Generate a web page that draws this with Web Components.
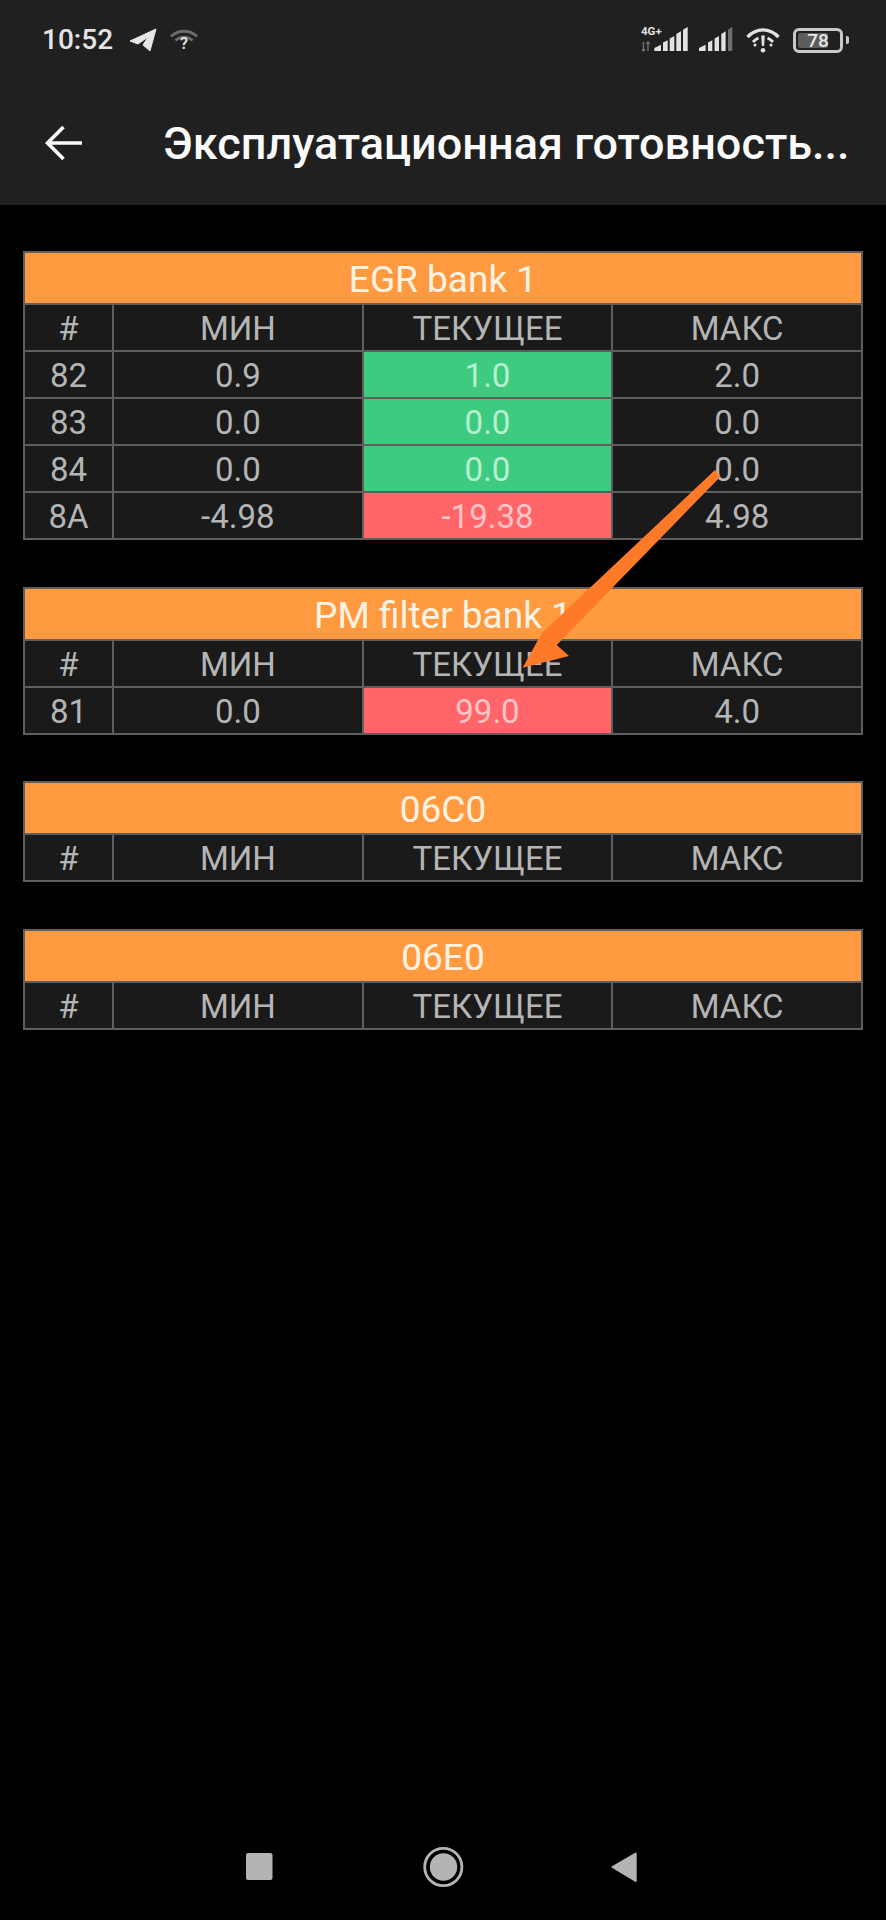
<!doctype html>
<html><head><meta charset="utf-8">
<style>
html,body{margin:0;background:#000;font-family:Roboto,"Liberation Sans",sans-serif}
body{width:886px;height:1920px;overflow:hidden;position:relative;display:flex;flex-direction:column}
</style></head><body>
<status-bar></status-bar>
<app-bar title="Эксплуатационная готовность..."></app-bar>
<main-list>
<readiness-table title="EGR bank 1" rows='[["82","0.9","1.0","2.0","g"],["83","0.0","0.0","0.0","g"],["84","0.0","0.0","0.0","g"],["8A","-4.98","-19.38","4.98","r"]]'></readiness-table>
<readiness-table title="PM filter bank 1" rows='[["81","0.0","99.0","4.0","r"]]'></readiness-table>
<readiness-table title="06C0" rows='[]'></readiness-table>
<readiness-table title="06E0" rows='[]'></readiness-table>
</main-list>
<nav-bar></nav-bar>
<arrow-mark></arrow-mark>
<script>
function def(name,html){customElements.define(name,class extends HTMLElement{connectedCallback(){if(this.shadowRoot)return;const s=this.attachShadow({mode:'open'});s.innerHTML=typeof html==='function'?html(this):html;}});}
def('status-bar',`<style>
:host{display:flex;align-items:center;box-sizing:border-box;height:80px;padding:0 37px 0 42px;background:#202020;color:#e6e6e6}
.t{font:500 28px/1 Roboto,sans-serif;color:#e4e4e4;width:87px}
svg{display:block;flex:none}
.sp{flex:1}
</style>
<span class="t">10:52</span>
<svg width="28" height="24" viewBox="0 0 28 24" style="margin-right:13px"><path d="M1 13 27 1 21 23 14 17 19 9 9 16Z" fill="#e6e6e6" stroke="#e6e6e6" stroke-width="1" stroke-linejoin="round"/></svg>
<svg width="28" height="22" viewBox="0 0 28 22"><path d="M1 7.500C8 .5 20 .5 27 7.500M5.500 11.500C10 7 18 7 22.500 11.500" fill="none" stroke="#6e6e6e" stroke-width="2.800"/><text x="14" y="19.500" text-anchor="middle" font-family="Roboto" font-weight="700" font-size="16" fill="#dcdcdc">?</text></svg>
<span class="sp"></span>
<svg width="47" height="30" viewBox="0 -4 47 30" style="margin-right:10.700px;margin-top:-4px"><text x="0" y="8" font-family="Roboto" font-weight="700" font-size="11.500" fill="#e0e0e0">4G+</text><path d="M2.500 24v-9M.8 22.300l1.700 1.700 1.700-1.700M7 15v9M5.300 16.700l1.700-1.700 1.700 1.700" stroke="#707070" stroke-width="1.400" fill="none"/><path fill="#e2e2e2" d="M13.300 24v-3l6.700-3.300V24ZM22 24v-8.500l4.700-2.200V24ZM28.700 24V11.500l4.600-2.500V24ZM35.300 24V7l4.700-2.700V24ZM42 24V2.700L46.700 0V24Z"/></svg>
<svg width="34" height="26" viewBox="0 0 34 26" style="margin-right:13px"><path fill="#e2e2e2" d="M0 24v-3l6.600-3.300V24ZM9 24v-8.500l4.300-2.200V24ZM15.600 24V11.500L20 9V24ZM22.300 24V7l4.300-2.700V24Z"/><path fill="#6d6d6d" d="M29 24V2.700L33.300 0V24Z"/></svg>
<svg width="34" height="26" viewBox="0 0 34 26" style="margin-right:13px"><path d="M1.500 10C10.500 .5 23.500 .5 32.500 10" fill="none" stroke="#e2e2e2" stroke-width="3.400"/><path d="M7 15C9 12.800 10.500 11.800 12.500 11M27 15C25 12.800 23.500 11.800 21.500 11" fill="none" stroke="#e2e2e2" stroke-width="2.800"/><circle cx="9" cy="18" r="1.500" fill="#e2e2e2"/><circle cx="25" cy="18" r="1.500" fill="#e2e2e2"/><path d="M15.200 8.500h3.600l-.7 10.500h-2.200Z" fill="#e2e2e2"/><circle cx="17" cy="23.300" r="2.300" fill="#e2e2e2"/></svg>
<span style="box-sizing:border-box;width:50px;height:25px;border:3px solid #c9c9c9;border-radius:6px;position:relative;display:flex;align-items:center;justify-content:center;font:500 19px/1 Roboto,sans-serif;color:#e6e6e6"><span style="position:absolute;left:2px;top:2px;bottom:2px;width:30px;background:#5c5c5c;border-radius:2px"></span><span style="position:relative">78</span></span>
<span style="width:3px;height:8px;background:#c9c9c9;border-radius:0 2px 2px 0;margin-left:3px;flex:none"></span>
`);
def('app-bar',h=>`<style>
:host{display:flex;align-items:center;box-sizing:border-box;height:125px;padding:0 0 0 45px;background:#202020}
svg{display:block;margin-right:81px;flex:none}
.t{font:500 45px/1.2 Roboto,sans-serif;color:#fafafa;white-space:nowrap;position:relative;top:1px}
</style>
<svg width="37" height="36" viewBox="0 0 37 36"><path d="M37 18H3M18.500 2 2.500 18l16 16" fill="none" stroke="#fafafa" stroke-width="3.600"/></svg>
<span class="t">${h.getAttribute('title')}</span>`);
def('main-list',`<style>:host{display:flex;flex-direction:column;gap:46.500px;padding:46px 23px 0 23px}</style><slot></slot>`);
def('readiness-table',h=>{
const c=(t,k='')=>`<div class="c ${k}">${t}</div>`;
const rows=JSON.parse(h.getAttribute('rows'));
return `<style>
:host{display:block;box-sizing:border-box;width:840px;border:2px solid #5e5e5e;background:#5e5e5e}
.title{height:50px;box-sizing:border-box;padding-top:4px;background:#ff9a40;color:#fff3e4;font:400 37px/46px Roboto,sans-serif;text-align:center;white-space:nowrap;overflow:hidden}
.g{display:grid;grid-template-columns:87px 1fr 1fr 1fr;gap:2px;margin-top:2px}
.c{height:45px;box-sizing:border-box;padding-top:3px;background:#1a1a1a;color:#b5b5b5;font:400 33px/42px Roboto,sans-serif;text-align:center;white-space:nowrap}
.cg{background:#3ecb7f;color:#b6f0d0}
.cr{background:#ff6569;color:#ffc4c6}
</style>
<div class="title">${h.getAttribute('title')}</div>
<div class="g">${c('#')+c('МИН')+c('ТЕКУЩЕЕ')+c('МАКС')}${rows.map(r=>c(r[0])+c(r[1])+c(r[2],'c'+r[4])+c(r[3])).join('')}</div>`;});
def('nav-bar',`<style>
:host{position:absolute;left:0;right:0;bottom:0;height:100px;display:block}
svg{position:absolute;left:0;top:0}
</style>
<svg width="886" height="100" viewBox="0 0 886 100"><rect x="246" y="33" width="26.500" height="27" rx="2" fill="#b4b4b4"/><circle cx="443.300" cy="47" r="18.600" fill="none" stroke="#b4b4b4" stroke-width="2.800"/><circle cx="443.500" cy="47" r="13.700" fill="#b4b4b4"/><path d="M635.700 33.500 612.500 47 635.700 61Z" fill="#b4b4b4" stroke="#b4b4b4" stroke-width="2" stroke-linejoin="round"/></svg>`);
def('arrow-mark',`<style>:host{position:absolute;left:0;top:0;width:886px;height:1920px;display:block;pointer-events:none}svg{display:block}</style>
<svg width="886" height="1920" viewBox="0 0 886 1920"><path d="M715 470 720 477 556.700 645 569 656 522.700 667.700 541.700 633.300Z" fill="#ff7a28"/></svg>`);
</script>
</body></html>
